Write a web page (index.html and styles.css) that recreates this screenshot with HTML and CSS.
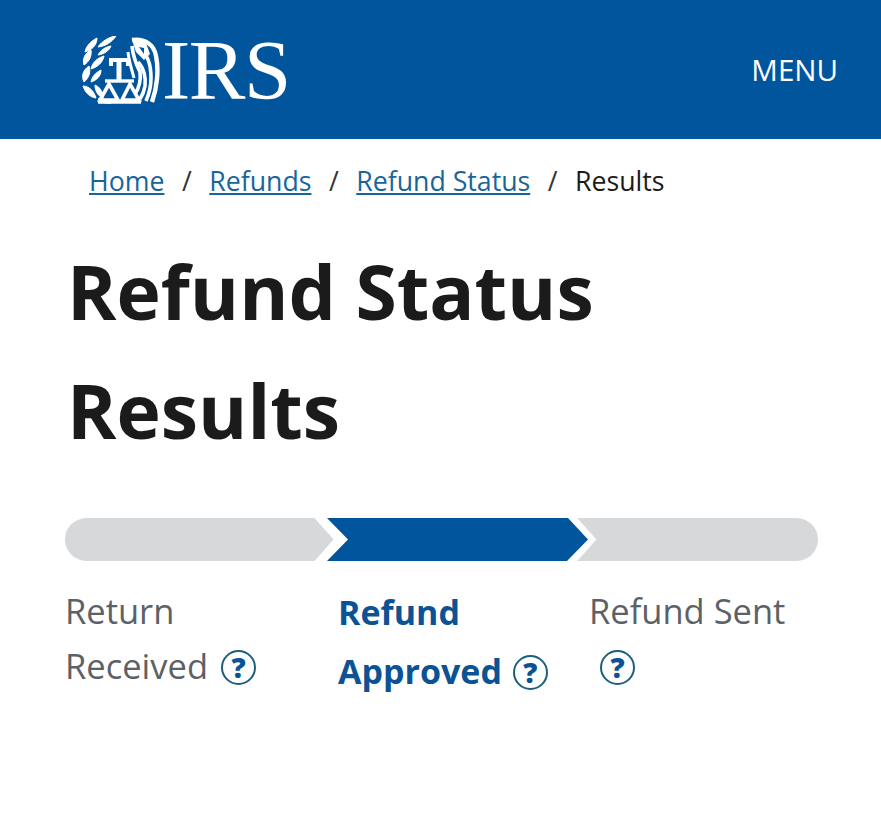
FILE: index.html
```html
<!DOCTYPE html>
<html lang="en">
<head>
    <meta charset="UTF-8">
    <meta name="viewport" content="width=device-width, initial-scale=1.0">
    <title>Refund Status Results</title>
    <link rel="stylesheet" href="styles.css">
</head>
<body>

<header class="site-header">
    <a class="logo" href="#">
        <svg class="logo-mark" width="78" height="68" viewBox="0 0 78 68">
            <!-- wreath -->
            <g fill="#fff" stroke="#fff" stroke-width="1">
                <path d="M16 11 C20 5 27 1 34 0 C30 6 24 10 16 11 Z"/>
                <path d="M3 16 C4 10 9 5 15 2 C15 9 10 14 3 16 Z"/>
                <path d="M16 19 C19 14 23 11 29 10 C27 15 22 18 16 19 Z"/>
                <path d="M2 29 C0 23 3 17 9 14 C10 20 7 26 2 29 Z"/>
                <path d="M9 33 C10 27 15 22 22 20 C21 26 16 31 9 33 Z"/>
                <path d="M2 46 C-1 40 1 34 7 30 C9 36 7 42 2 46 Z"/>
                <path d="M9 46 C10 41 13 37 19 34 C19 40 15 44 9 46 Z"/>
                <path d="M1 50 C7 50 12 55 14 62 C7 61 3 56 1 50 Z"/>
                <path d="M13 49 C18 51 21 56 21 62 C16 60 13 55 13 49 Z"/>
                <path d="M16 63 C20 62 25 64 29 67 C24 68 19 66 16 63 Z"/>
            </g>
            <!-- scales -->
            <g fill="none" stroke="#fff">
                <path d="M29 30 V24 H46 V30" stroke-width="4"/>
                <path d="M37 24 V46" stroke-width="5"/>
                <path d="M23 45 H52" stroke-width="3.4"/>
                <path d="M27 48 L18 64 H36 Z" stroke-width="3.6"/>
                <path d="M48 48 L40 64 H57 Z" stroke-width="3.6"/>
                <path d="M16 66 H59" stroke-width="3.4"/>
            </g>
            <!-- eagle -->
            <g fill="none" stroke="#fff">
                <path d="M50 4 C62 2 72 8 74 20 C77 34 75 52 70 66" stroke-width="4.4"/>
                <path d="M59 15 C67 20 69 30 69 42 C69 50 67 58 64 65" stroke-width="3.6"/>
                <path d="M56 26 C62 32 64 42 63 50 C62 56 60 60 58 63" stroke-width="3.6"/>
                <path d="M50 10 C51 20 55 30 58 36 C59 44 57 52 53 58" stroke-width="3.6"/>
                <path d="M46 16 C47 26 50 34 52 42" stroke-width="3"/>
            </g>
            <path d="M50 4 L64 7 L68 18 L62 24 L54 16 Z" fill="#fff"/>
            <path d="M57 11 L62 12 L62 18 Z" fill="#01559d"/>
        </svg>
        <span class="logo-text">IRS</span>
    </a>
    <a class="menu-link" href="#">MENU</a>
</header>

<nav class="breadcrumbs">
    <a href="#">Home</a>
    <span class="sep">/</span>
    <a href="#">Refunds</a>
    <span class="sep">/</span>
    <a href="#">Refund Status</a>
    <span class="sep">/</span>
    <span>Results</span>
</nav>

<main class="content">
    <h1>Refund Status<br>Results</h1>

    <svg class="progress" width="753" height="43" viewBox="0 0 753 43">
        <rect width="753" height="43" rx="21.5" fill="#d6d8da"/>
        <polygon points="254,-1 274,21.5 254,44 506,44 526,21.5 506,-1" fill="#fff" stroke="#fff" stroke-width="8"/>
        <polygon points="262,0 283,21.5 262,43 502,43 523,21.5 503,0" fill="#01559d"/>
    </svg>

    <div class="steps">
        <div class="step">
            <div>Return</div>
            <div>Received <span class="help">?</span></div>
        </div>
        <div class="step current">
            <div>Refund</div>
            <div>Approved <span class="help">?</span></div>
        </div>
        <div class="step">
            <div>Refund Sent</div>
            <div><span class="help help-alone">?</span></div>
        </div>
    </div>
</main>

</body>
</html>
```

FILE: styles.css
```css
body {
    font-family: "Open Sans", "Noto Sans", sans-serif;
    background-color: #ffffff;
    color: #1b1b1b;
    margin: 0;
}
a {
    color: inherit;
}
.site-header {
    display: flex;
    align-items: center;
    justify-content: space-between;
    height: 139px;
    box-sizing: border-box;
    padding: 0 43px 0 82px;
    background-color: #01559d;
    color: #ffffff;
}
.logo {
    display: flex;
    align-items: center;
    text-decoration: none;
}
.logo-mark {
    display: block;
}
.logo-text {
    font-family: "Liberation Serif", serif;
    font-size: 85px;
    line-height: 68px;
    letter-spacing: -1.5px;
    margin-left: 2px;
}
.menu-link {
    font-size: 29.5px;
    text-decoration: none;
}
.breadcrumbs {
    display: flex;
    gap: 17.5px;
    padding: 22px 0 0 89px;
    font-size: 26.7px;
    line-height: 40px;
}
.breadcrumbs a {
    color: #17659a;
}
.sep {
    color: #333333;
}
.content {
    padding: 0 63px 0 65px;
}
h1 {
    margin: 31px 0 0 2px;
    font-size: 75px;
    line-height: 119px;
    font-weight: 700;
}
.progress {
    display: block;
    margin-top: 48px;
}
.steps {
    display: grid;
    grid-template-columns: 273px 251px 1fr;
    margin-top: 22px;
    font-size: 34.5px;
    line-height: 55px;
    color: #5c6166;
}
.step.current {
    color: #0b5394;
    font-size: 34px;
    font-weight: 700;
    line-height: 59px;
}
.help {
    display: inline-flex;
    align-items: center;
    justify-content: center;
    width: 35px;
    height: 35px;
    box-sizing: border-box;
    margin-left: 4px;
    border: 2px solid #1d5f7a;
    border-radius: 50%;
    color: #0b5394;
    font-size: 28px;
    line-height: 1;
    font-weight: 800;
    vertical-align: 1px;
}
.current .help {
    margin-left: 2px;
}
.help-alone {
    margin-left: 11px;
}
```
